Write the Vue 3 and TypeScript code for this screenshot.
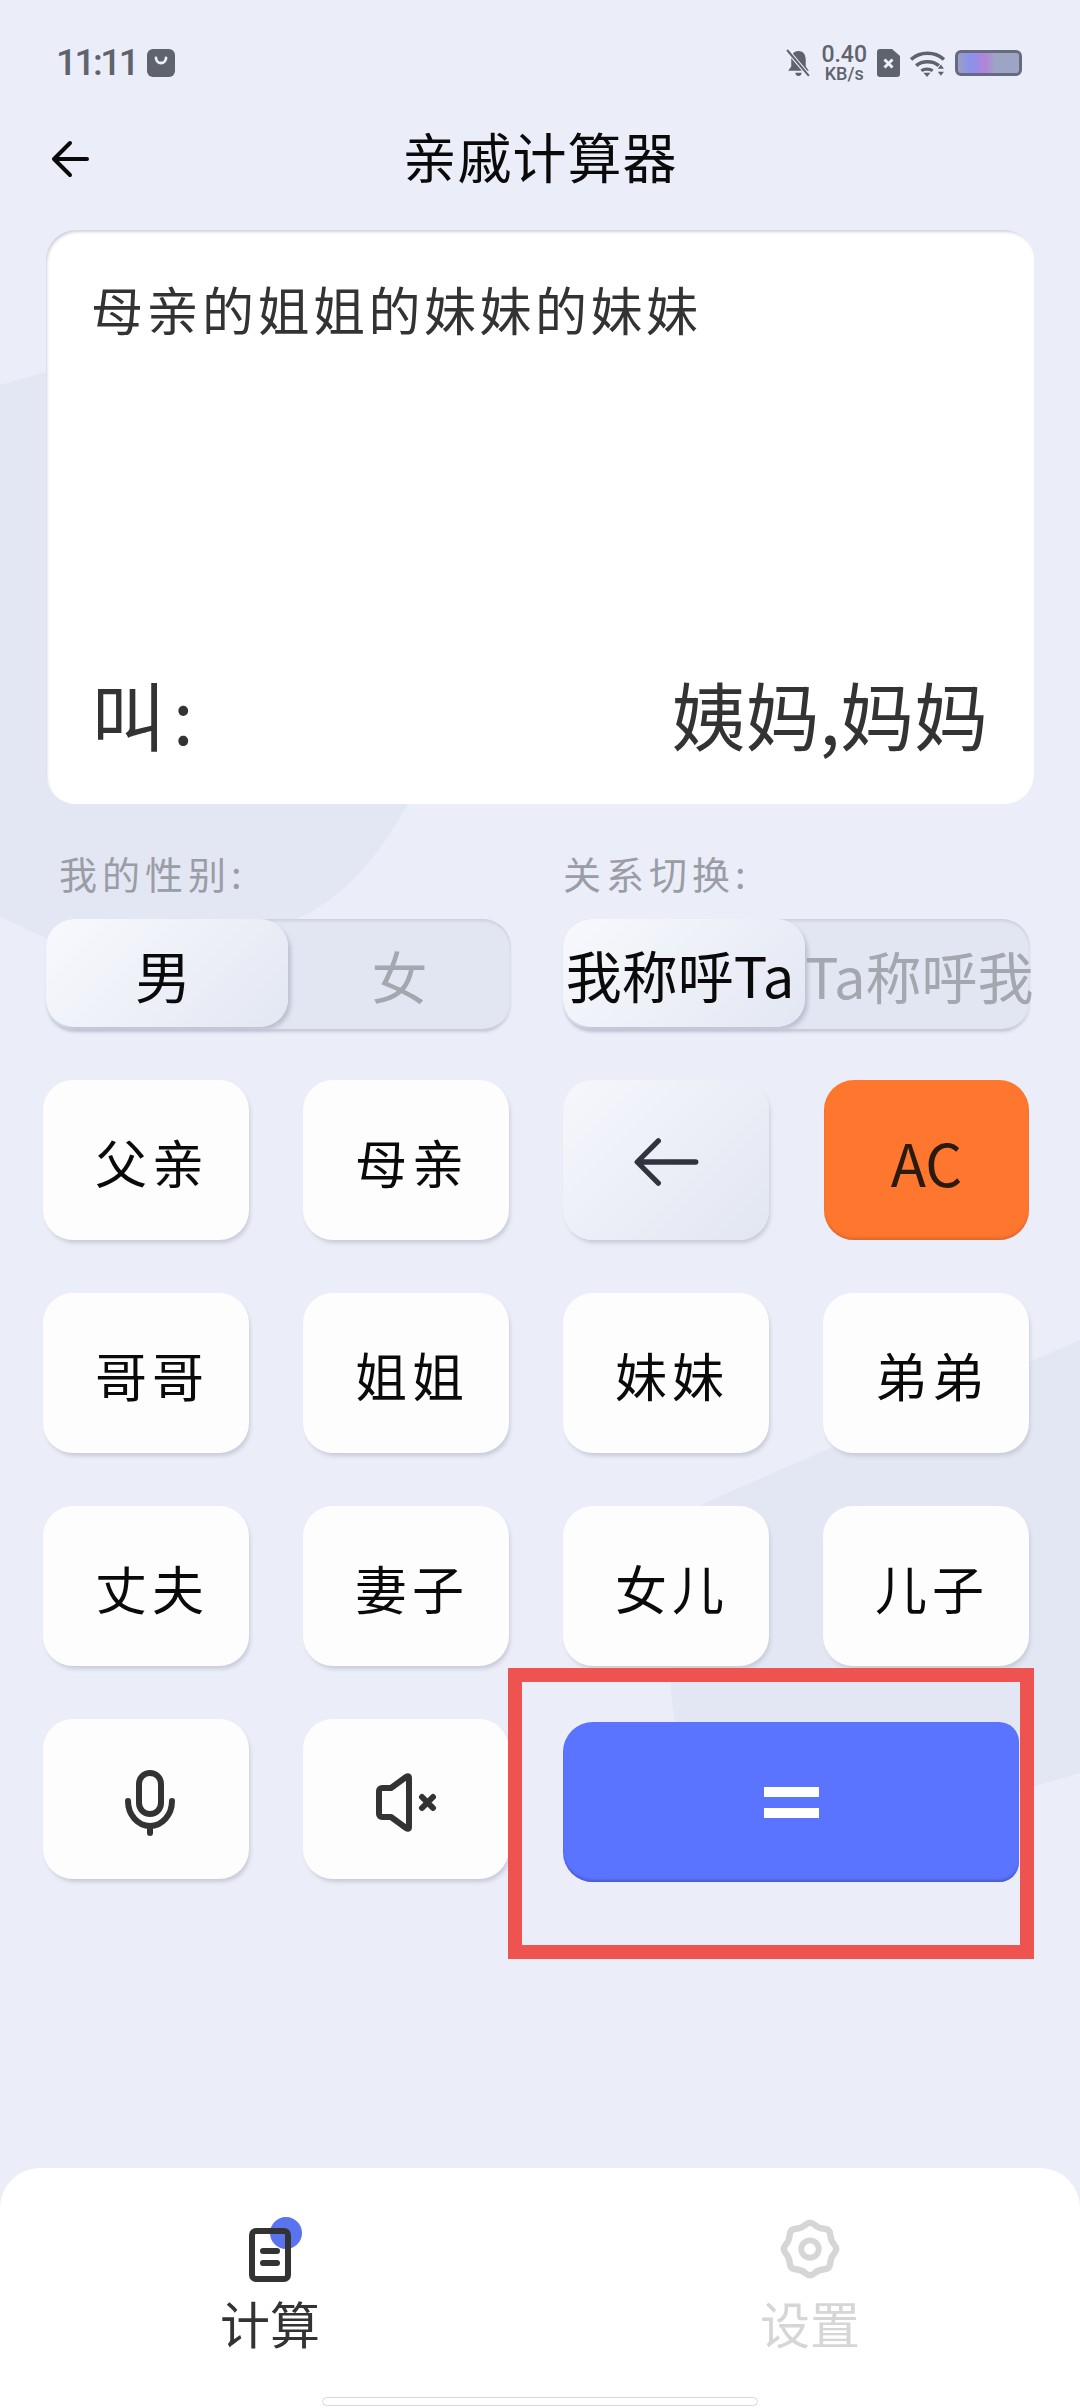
<script setup lang="ts">
interface Key {
  label: string
  kind?: 'back' | 'ac'
}

const keys: Key[] = [
  { label: '父亲' },
  { label: '母亲' },
  { label: '', kind: 'back' },
  { label: 'AC', kind: 'ac' },
  { label: '哥哥' },
  { label: '姐姐' },
  { label: '妹妹' },
  { label: '弟弟' },
  { label: '丈夫' },
  { label: '妻子' },
  { label: '女儿' },
  { label: '儿子' },
]

// wavy outline of the settings gear: 8 lobes, smoothed through the midpoints
function gearPath(): string {
  const pts: [number, number][] = []
  for (let i = 0; i < 16; i++) {
    const r = i % 2 === 0 ? 29 : 23
    const a = (i * Math.PI) / 8
    pts.push([30 + r * Math.sin(a), 30 - r * Math.cos(a)])
  }
  const mid = (a: [number, number], b: [number, number]) =>
    `${((a[0] + b[0]) / 2).toFixed(1)} ${((a[1] + b[1]) / 2).toFixed(1)}`
  let d = `M${mid(pts[15], pts[0])}`
  pts.forEach((p, i) => {
    d += `Q${p[0].toFixed(1)} ${p[1].toFixed(1)} ${mid(p, pts[(i + 1) % 16])}`
  })
  return d + 'Z'
}
</script>

<template>
  <div class="page">
    <svg class="backdrop" viewBox="0 0 1080 2408">
      <path d="M0 385L46 372L500 250L415 790C385 850 345 900 293 920C250 940 150 960 46 938L0 917Z" fill="#e2e7f3" />
      <path d="M704 1503L1080 1340V1773L1022 1790L720 1860C690 1800 670 1720 671 1682C660 1600 680 1530 704 1503Z" fill="#e2e7f3" />
    </svg>

    <div class="status">
      <div class="status-left">
        <span class="status-time">11:11</span>
        <svg class="status-app" viewBox="0 0 14 14">
          <rect width="14" height="14" rx="3" fill="#5f636e" />
          <path d="M4.500 4.500a2.500 2.500 0 0 0 5 0" fill="none" stroke="#eef0f8" stroke-width="1.400" stroke-linecap="round" />
        </svg>
      </div>
      <div class="status-right">
        <svg class="status-bell" viewBox="0 0 24 28">
          <path d="M12 2c5 0 7 4 7 9v6l3 4H2l3-4v-6c0-5 2-9 7-9z M9 23h6a3 3 0 0 1-6 0z" fill="#5f636e" />
          <path d="M1 1l21 25" stroke="#eef0f8" stroke-width="4" />
          <path d="M1 1l21 25" stroke="#5f636e" stroke-width="2" />
        </svg>
        <div class="status-speed">
          <span>0.40</span>
          <span class="status-unit">KB/s</span>
        </div>
        <svg class="status-sim" viewBox="0 0 23 28">
          <path d="M3 0h12l8 7v18a3 3 0 0 1-3 3H3a3 3 0 0 1-3-3V3a3 3 0 0 1 3-3z" fill="#5f636e" />
          <path d="M7.500 10.500l8 8m0-8l-8 8" stroke="#eef0f8" stroke-width="3" />
        </svg>
        <svg class="status-wifi" viewBox="0 0 34 26">
          <path d="M1 9c9-8 23-8 32 0M6 15c6-5 16-5 22 0" fill="none" stroke="#5f636e" stroke-width="3.500" />
          <path d="M11 20c3-2 8-2 11 0" fill="none" stroke="#5f636e" stroke-width="3" />
          <path d="M13 22h7l-3.500 4z" fill="#5f636e" />
          <path d="M30 14l3 4h-6zM30 25l3-4h-6z" fill="#5f636e" />
        </svg>
        <div class="status-battery"></div>
      </div>
    </div>

    <div class="nav">
      <svg class="nav-back" viewBox="0 0 40 40">
        <path d="M37 20H5M20 4L4 20l16 16" fill="none" stroke="#0a0a0a" stroke-width="4" stroke-linecap="round" stroke-linejoin="round" />
      </svg>
      <h1 class="nav-title">亲戚计算器</h1>
    </div>

    <div class="display">
      <div class="display-query">母亲的姐姐的妹妹的妹妹</div>
      <div class="display-result">
        <span class="display-call">叫:</span>
        <span>姨妈,妈妈</span>
      </div>
    </div>

    <div class="options">
      <div class="option">
        <div class="option-label option-label-first">我的性别:</div>
        <div class="toggle">
          <div class="toggle-item toggle-on">男</div>
          <div class="toggle-item">女</div>
        </div>
      </div>
      <div class="option">
        <div class="option-label">关系切换:</div>
        <div class="toggle">
          <div class="toggle-item toggle-on">我称呼Ta</div>
          <div class="toggle-item">Ta称呼我</div>
        </div>
      </div>
    </div>

    <div class="keypad">
      <button
        v-for="key in keys"
        :key="key.label + key.kind"
        class="key"
        :class="key.kind ? 'key-' + key.kind : ''"
      >
        <svg v-if="key.kind === 'back'" class="key-back-icon" viewBox="0 0 70 50">
          <path d="M66 25H6M27 3L5 25l22 22" fill="none" stroke="#30343f" stroke-width="5.500" stroke-linecap="round" stroke-linejoin="round" />
        </svg>
        <template v-else>{{ key.label }}</template>
      </button>

      <button class="key">
        <svg class="key-mic" viewBox="0 0 50 66">
          <rect x="14" y="3" width="22" height="41" rx="11" fill="none" stroke="#333" stroke-width="6" />
          <path d="M3 31c0 14 10 25 22 25s22-11 22-25" fill="none" stroke="#333" stroke-width="6" stroke-linecap="round" />
          <path d="M25 56v7" stroke="#333" stroke-width="6" stroke-linecap="round" />
        </svg>
      </button>
      <button class="key">
        <svg class="key-mute" viewBox="0 0 61 61">
          <path d="M3 19a3 3 0 0 1 3-3h9L30 5q3-2 3 1v49q0 3-3 1L15 45H6a3 3 0 0 1-3-3z" fill="none" stroke="#333" stroke-width="6" stroke-linejoin="round" />
          <path d="M46 25l11 11m0-11L46 36" stroke="#333" stroke-width="6" stroke-linecap="round" />
        </svg>
      </button>
      <div class="equal-cell">
        <button class="key key-equal">
          <span class="equal-sign"></span>
        </button>
      </div>
    </div>

    <div class="highlight"></div>

    <div class="tabbar">
      <div class="tab">
        <div class="tab-icon">
          <span class="tab-dot"></span>
          <svg viewBox="0 0 42 54" class="tab-doc">
            <rect x="3" y="3" width="36" height="48" rx="4" fill="none" stroke="#333" stroke-width="6" />
            <rect x="11" y="20" width="20" height="6" rx="3" fill="#333" />
            <rect x="11" y="32" width="20" height="6" rx="3" fill="#333" />
          </svg>
        </div>
        <div class="tab-label">计算</div>
      </div>
      <div class="tab tab-muted">
        <div class="tab-icon">
          <svg viewBox="-2 -2 64 64" class="tab-gear">
            <path :d="gearPath()" fill="none" stroke="#d6d6d6" stroke-width="6.500" />
            <circle cx="30" cy="30" r="9" fill="none" stroke="#d6d6d6" stroke-width="6" />
          </svg>
        </div>
        <div class="tab-label">设置</div>
      </div>
      <div class="home-bar"></div>
    </div>
  </div>
</template>

<style>
html,
body {
  margin: 0;
  background: #ebeef8;
}
</style>

<style scoped>
.page {
  position: relative;
  width: 1080px;
  height: 2408px;
  overflow: hidden;
  background: #ebeef8;
  font-family: "Noto Sans CJK SC", "Noto Sans", sans-serif;
  color: #111;
}

.backdrop {
  position: absolute;
  left: 0;
  top: 0;
  width: 1080px;
  height: 2408px;
}

.status {
  position: relative;
  display: flex;
  justify-content: space-between;
  align-items: center;
  height: 62px;
  padding: 32px 58px 0 56px;
  color: #5f636e;
}

.status-left {
  display: flex;
  align-items: center;
  gap: 10px;
}

.status-time {
  font-family: "Roboto", sans-serif;
  font-size: 37px;
  font-weight: 500;
  line-height: 62px;
  letter-spacing: -2.500px;
}

.status-app {
  width: 28px;
  height: 28px;
}

.status-right {
  display: flex;
  align-items: center;
  gap: 10px;
}

.status-bell {
  width: 25px;
  height: 29px;
}

.status-speed {
  display: flex;
  flex-direction: column;
  align-items: center;
  font-family: "Roboto", sans-serif;
  font-size: 23px;
  font-weight: 500;
  line-height: 20px;
}

.status-unit {
  font-size: 18px;
  line-height: 17px;
}

.status-sim {
  width: 23px;
  height: 28px;
}

.status-wifi {
  width: 35px;
  height: 27px;
}

.status-battery {
  width: 61px;
  height: 20px;
  border: 3px solid #666b80;
  border-radius: 6px;
  background: linear-gradient(90deg, #9aa0c0 0, #8a92ee 20%, #b184d8 45%, #9ea4c4 60%, #9ea4c4 100%);
}

.nav {
  position: relative;
  display: flex;
  align-items: center;
  justify-content: center;
  height: 90px;
  margin-top: 17px;
}

.nav-back {
  position: absolute;
  left: 50px;
  top: 28px;
  width: 40px;
  height: 40px;
}

.nav-title {
  margin: 0;
  font-size: 54px;
  font-weight: 400;
  line-height: 90px;
  letter-spacing: 1px;
  color: #0a0a0a;
}

.display {
  position: relative;
  display: flex;
  flex-direction: column;
  justify-content: space-between;
  box-sizing: border-box;
  height: 574px;
  margin: 29px 46px 0 46px;
  padding: 43px 46px 41px 45px;
  background: #fff;
  border-radius: 30px;
  box-shadow: inset 2px 3px 3px -1px #cfd2dc;
}

.display-query {
  font-size: 52px;
  line-height: 72px;
  letter-spacing: 3.500px;
  color: #333;
}

.display-result {
  display: flex;
  justify-content: space-between;
  font-size: 74px;
  line-height: 100px;
  color: #333;
}

.display-call {
  letter-spacing: 8px;
}

.options {
  position: relative;
  display: grid;
  grid-template-columns: 465px 467px;
  column-gap: 52px;
  margin: 44px 0 0 46px;
}

.option-label {
  font-size: 38px;
  line-height: 50px;
  letter-spacing: 5px;
  color: #9a9da5;
}

.option-label-first {
  padding-left: 13px;
}

.toggle {
  display: grid;
  grid-template-columns: 242px 1fr;
  height: 110px;
  margin-top: 21px;
  border-radius: 28px;
  background: #e2e6f2;
  box-shadow: 0 4px 3px -1px #c6cad8, inset 0 2px 3px #ccd0dc;
}

.toggle-item {
  display: flex;
  align-items: center;
  justify-content: center;
  white-space: nowrap;
  font-size: 56px;
  color: #a4a7ae;
}

.toggle-on {
  box-sizing: border-box;
  height: 108px;
  padding-right: 8px;
  border-radius: 28px;
  background: linear-gradient(135deg, #f8f9fd 0%, #e3e7f3 100%);
  box-shadow: 4px 4px 4px -1px #bcc0d2;
  color: #0a0a0a;
}

.keypad {
  position: relative;
  display: grid;
  grid-template-columns: repeat(4, 206px);
  grid-auto-rows: 160px;
  column-gap: 54px;
  row-gap: 53px;
  margin: 51px 0 0 43px;
}

.key {
  display: flex;
  align-items: center;
  justify-content: center;
  padding: 3px 0 0 12px;
  border: none;
  border-radius: 30px;
  background: #fdfdfe;
  box-shadow: 2px 4px 4px -1px #c8cbd8;
  font-family: inherit;
  font-size: 52px;
  letter-spacing: 5px;
  color: #0a0a0a;
}

.key-back {
  padding-left: 0;
  background: linear-gradient(135deg, #f6f7fc 0%, #e2e6f2 100%);
}

.key-back-icon {
  width: 68px;
  height: 48px;
}

.key-ac {
  margin-left: 1px;
  padding-left: 0;
  background: #ff762e;
  box-shadow: inset 0 -3px 3px -1px #d76a30;
  font-size: 58px;
  letter-spacing: 0;
  color: #2a1a10;
}

.key-mic {
  width: 50px;
  height: 66px;
  margin-top: 4px;
  margin-left: -5px;
}

.key-mute {
  width: 61px;
  height: 61px;
  margin-top: 4px;
  margin-left: -12px;
}

.equal-cell {
  grid-column: span 2;
  display: flex;
  padding: 3px 10px 0 0;
}

.key-equal {
  width: 457px;
  height: 160px;
  padding: 0;
  border-radius: 30px 20px 20px 30px;
  background: #5a74ff;
  box-shadow: inset 0 -3px 3px -1px #4659c8;
}

.equal-sign {
  display: block;
  width: 55px;
  height: 31px;
  border-top: 10px solid #fff;
  border-bottom: 10px solid #fff;
  box-sizing: border-box;
}

.highlight {
  position: absolute;
  left: 508px;
  top: 1668px;
  width: 526px;
  height: 291px;
  box-sizing: border-box;
  border: 14px solid #ef5350;
}

.tabbar {
  position: absolute;
  left: 0;
  right: 0;
  top: 2168px;
  bottom: 0;
  display: grid;
  grid-template-columns: 1fr 1fr;
  background: #fff;
  border-radius: 40px 40px 0 0;
}

.tab {
  display: flex;
  flex-direction: column;
  align-items: center;
  padding-top: 50px;
}

.tab-icon {
  position: relative;
  display: flex;
  justify-content: center;
  height: 62px;
}

.tab-doc {
  position: relative;
  width: 42px;
  height: 54px;
  margin-top: 10px;
}

.tab-gear {
  width: 62px;
  height: 62px;
}

.tab-dot {
  position: absolute;
  left: 21px;
  top: -1px;
  width: 32px;
  height: 32px;
  border-radius: 50%;
  background: #5a74f0;
}

.tab-label {
  margin-top: 12px;
  font-size: 50px;
  line-height: 60px;
  color: #333;
}

.tab-muted .tab-label {
  color: #d6d6d6;
}

.home-bar {
  position: absolute;
  left: 322px;
  top: 229px;
  width: 436px;
  height: 9px;
  box-sizing: border-box;
  background: #fff;
  border: 1px solid #d8d8dc;
  border-radius: 5px;
}
</style>
